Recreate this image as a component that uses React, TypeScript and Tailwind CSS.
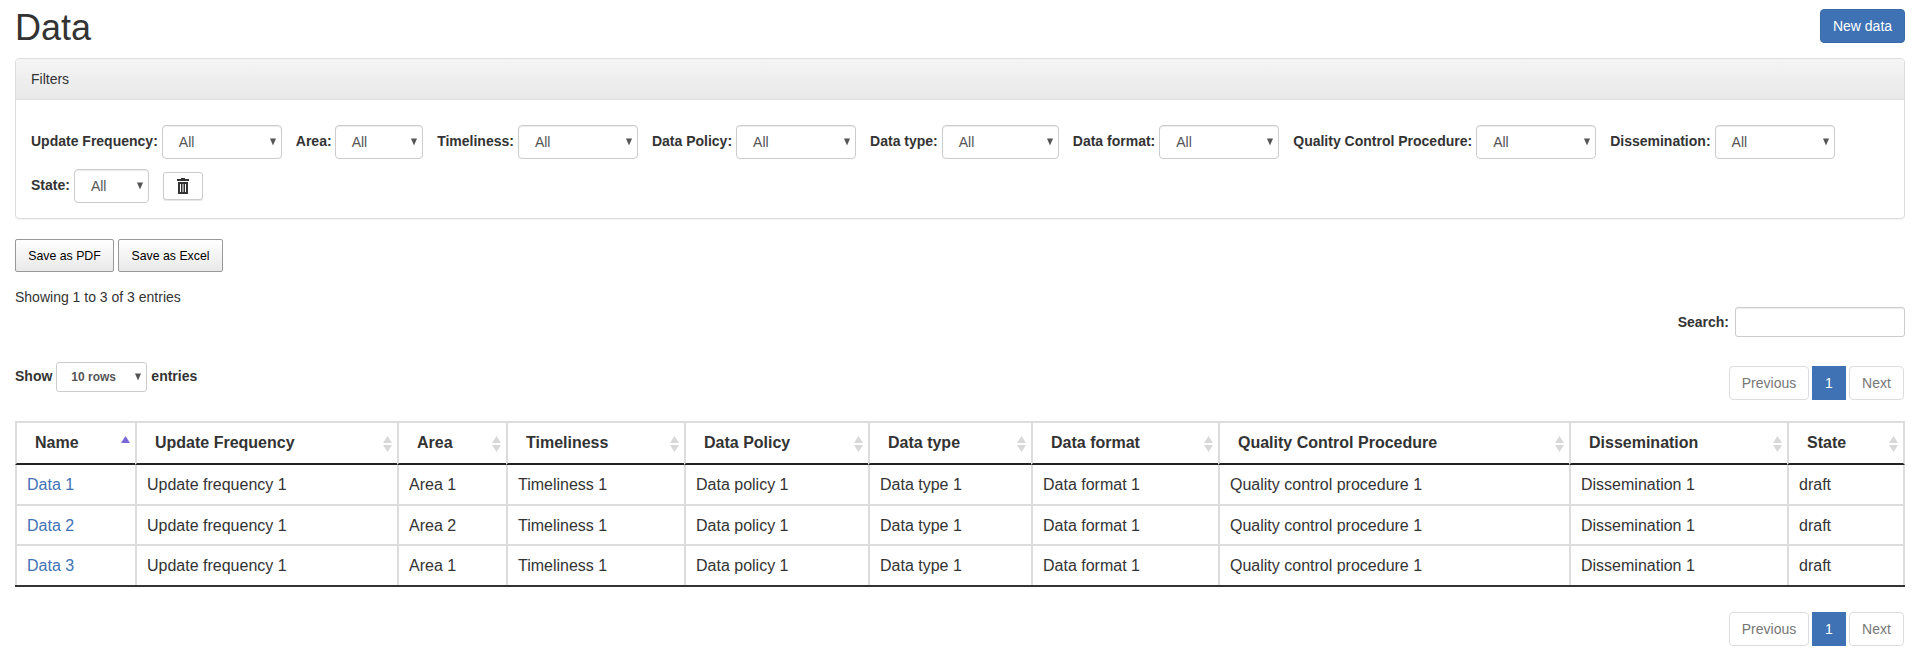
import React from "react";

const font = "font-['Liberation_Sans',Arial,sans-serif]";

function Caret() {
  return <span className="pointer-events-none absolute right-[5px] top-1/2 -translate-y-1/2 text-[0] border-x-[3px] border-t-[7px] border-x-transparent border-t-[#555]" />;
}

function FilterSelect({ label, width, labelGap = "mr-[4px]" }: { label: string; width: string; labelGap?: string }) {
  return (
    <div className="flex items-center">
      <span className={`${labelGap} -mt-[2px] font-bold whitespace-nowrap`}>{label}:</span>
      <div className={`relative h-[34px] ${width} flex items-center pl-[16px] rounded-[4px] border border-[#ccc] bg-white text-[#555] shadow-[inset_0_1px_1px_rgba(0,0,0,0.075)]`}>
        All
        <Caret />
      </div>
    </div>
  );
}

function Pagination() {
  return (
    <div className="flex justify-end pr-[1px] gap-[3px] text-[14px]">
      <span className="h-[34px] w-[80px] flex items-center justify-center border border-[#ddd] rounded-[4px] text-[#777]">Previous</span>
      <span className="h-[34px] w-[34px] flex items-center justify-center bg-[#3f72b4] text-white">1</span>
      <span className="h-[34px] w-[55px] flex items-center justify-center border border-[#ddd] rounded-[4px] text-[#777]">Next</span>
    </div>
  );
}

function Sort({ asc }: { asc?: boolean }) {
  return (
    <svg className="absolute right-[5px] top-[13px]" width="9" height="16" viewBox="0 0 9 16">
      <path d="M4.5 0 L9 7 L0 7 Z" fill={asc ? "#7b68d8" : "#d8d8d8"} />
      {!asc && <path d="M0 9 L9 9 L4.5 16 Z" fill="#d8d8d8" />}
    </svg>
  );
}

const columns = [
  ["Name", "w-[120px]"],
  ["Update Frequency", "w-[262px]"],
  ["Area", "w-[109px]"],
  ["Timeliness", "w-[178px]"],
  ["Data Policy", "w-[184px]"],
  ["Data type", "w-[163px]"],
  ["Data format", "w-[187px]"],
  ["Quality Control Procedure", "w-[351px]"],
  ["Dissemination", "w-[218px]"],
  ["State", "w-[118px]"],
];

const rows = [
  ["Data 1", "Area 1", "h-[41px] pt-[1px] border-b-2"],
  ["Data 2", "Area 2", "h-[40px] pt-[1px] border-b-2"],
  ["Data 3", "Area 1", "h-[39px]"],
];

export default function App() {
  return (
    <div className={`${font} text-[14px] leading-[20px] text-[#333] bg-white h-[659px] px-[15px] overflow-hidden`}>
      <div className="flex justify-between h-[58px]">
        <h1 className="text-[36px] leading-[40px] mt-[8px] font-normal">Data</h1>
        <button className="mt-[9px] h-[34px] w-[85px] rounded-[4px] bg-[#3f72b4] border border-[#3a6aa8] text-white">New data</button>
      </div>

      <div className="h-[161px] border border-[#ddd] rounded-[4px] shadow-[0_1px_1px_rgba(0,0,0,0.05)]">
        <div className="h-[41px] px-[15px] flex items-center border-b border-[#ddd] rounded-t-[4px] bg-gradient-to-b from-[#f5f5f5] to-[#e8e8e8]">Filters</div>
        <div className="pl-[15px] pt-[25px] flex flex-wrap gap-x-[14px] gap-y-[10px]">
          <FilterSelect label="Update Frequency" width="w-[120px]" />
          <FilterSelect label="Area" width="w-[88.5px]" labelGap="mr-[3px]" />
          <FilterSelect label="Timeliness" width="w-[120px]" />
          <FilterSelect label="Data Policy" width="w-[120px]" />
          <FilterSelect label="Data type" width="w-[117px]" />
          <FilterSelect label="Data format" width="w-[120px]" />
          <FilterSelect label="Quality Control Procedure" width="w-[120px]" />
          <FilterSelect label="Dissemination" width="w-[120px]" />
          <FilterSelect label="State" width="w-[75px]" />
          <button className="h-[28px] w-[40px] mt-[3px] flex items-center justify-center border border-[#ccc] rounded-[3px] bg-white shadow-[0_1px_1px_rgba(0,0,0,0.1)]">
            <svg width="12" height="16" viewBox="0 0 12 16" fill="#333">
              <path d="M4 0h4v1h4v2H0V1h4zM1 4h10v12H1zM3 6v8h1V6zM5.5 6v8h1V6zM8 6v8h1V6z" fillRule="evenodd" />
            </svg>
          </button>
        </div>
      </div>

      <div className="flex gap-[4px] mt-[20px] text-[12.32px] text-black">
        <button className="h-[33px] w-[99px] rounded-[2px] border border-[#999] bg-gradient-to-b from-white to-[#e9e9e9]">Save as PDF</button>
        <button className="h-[33px] w-[105px] rounded-[2px] border border-[#999] bg-gradient-to-b from-white to-[#e9e9e9]">Save as Excel</button>
      </div>

      <div className="mt-[15px] h-[20px]">Showing 1 to 3 of 3 entries</div>

      <div className="flex justify-end items-center gap-[6px] h-[30px]">
        <span className="font-bold">Search:</span>
        <div className="w-[170px] h-[30px] border border-[#ccc] rounded-[3px] bg-white shadow-[inset_0_1px_1px_rgba(0,0,0,0.075)]" />
      </div>

      <div className="flex justify-between mt-[25px]">
        <div className="flex items-center h-[30px] font-bold">
          <span className="-mt-[2px]">Show</span>
          <div className="relative mx-[4px] w-[91px] h-[30px] flex items-center pl-[14px] border border-[#ccc] rounded-[3px] text-[12px] text-[#555]">
            10 rows
            <Caret />
          </div>
          <span className="-mt-[2px]">entries</span>
        </div>
        <div className="mt-[4px]"><Pagination /></div>
      </div>

      <table className="mt-[21px] w-[1890px] table-fixed border-separate border-spacing-0 border-b-2 border-[#333]">
        <thead>
          <tr>
            {columns.map(([name, w], i) => (
              <th key={name} className={`${w} relative h-[44px] pl-[18px] text-left text-[16px] font-bold border-t-2 border-l-2 ${i === 9 ? "border-r-2" : ""} border-[#ddd] border-b-2 border-b-[#222]`}>
                {name}
                <Sort asc={i === 0} />
              </th>
            ))}
          </tr>
        </thead>
        <tbody className="text-[16px]">
          {rows.map(([name, area, rowClass]) => {
            const cells = [name, "Update frequency 1", area, "Timeliness 1", "Data policy 1", "Data type 1", "Data format 1", "Quality control procedure 1", "Dissemination 1", "draft"];
            return (
              <tr key={name}>
                {cells.map((c, i) => (
                  <td key={i} className={`${rowClass} pl-[10px] border-l-2 ${i === 9 ? "border-r-2" : ""} border-[#ddd] ${i === 0 ? "text-[#3f72b4]" : ""}`}>{c}</td>
                ))}
              </tr>
            );
          })}
        </tbody>
      </table>

      <div className="mt-[25px]"><Pagination /></div>
    </div>
  );
}
